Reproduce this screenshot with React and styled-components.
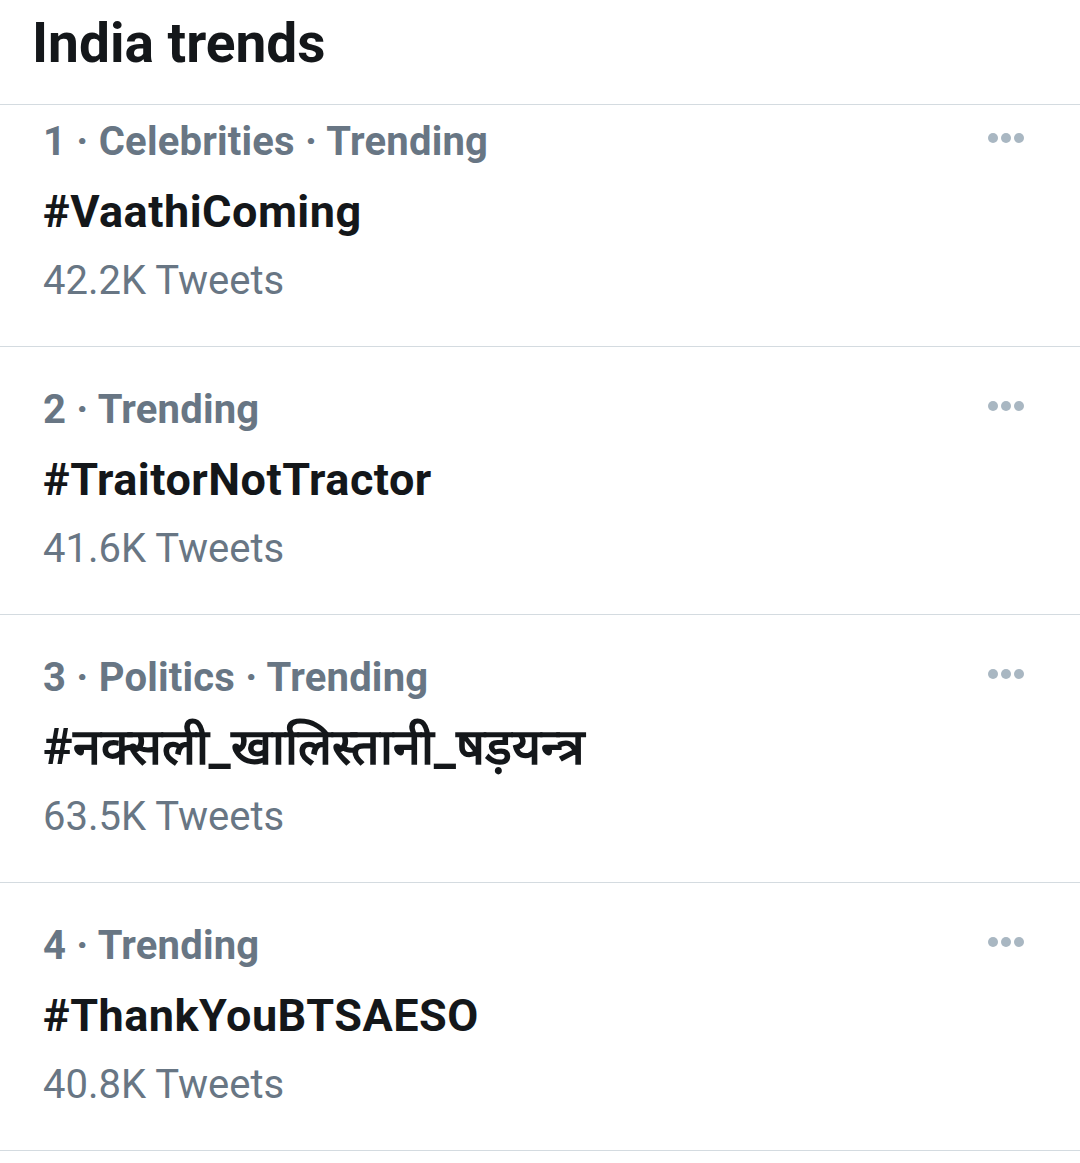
import React from 'react';
import styled, { createGlobalStyle } from 'styled-components';

const GlobalStyle = createGlobalStyle`
    html, body {
        margin: 0;
        padding: 0;
        background: #ffffff;
    }
    body {
        font-family: Roboto, "Noto Sans", "Liberation Sans", sans-serif;
    }
`;

const trends = [
    { rank: 1, category: 'Celebrities', name: '#VaathiComing', count: '42.2K' },
    { rank: 2, name: '#TraitorNotTractor', count: '41.6K' },
    { rank: 3, category: 'Politics', name: '#नक्सली_खालिस्तानी_षड़यन्त्र', count: '63.5K', lang: 'hi' },
    { rank: 4, name: '#ThankYouBTSAESO', count: '40.8K' },
];

const TrendsPanel = styled.div`
    width: 1080px;
    background: #ffffff;
`;

const PanelHeader = styled.div`
    height: 105px;
    box-sizing: border-box;
    padding: 3px 32px 0;
    border-bottom: 1px solid #d4dbe0;

    h1 {
        margin: 0;
        font-family: Roboto, sans-serif;
        font-weight: 700;
        font-size: 55px;
        line-height: 80px;
        color: #14171a;
    }
`;

// first row is partly scrolled under the header
const TrendRow = styled.div`
    display: flex;
    align-items: flex-start;
    padding: ${(p) => (p.$clipped ? '2px' : '28px')} 56px 30px 43px;
    border-bottom: 1px solid #d4dbe0;
`;

const TrendBody = styled.div`
    flex: 1;
    font-family: Roboto, sans-serif;
`;

const TrendMeta = styled.div`
    font-size: 40px;
    line-height: 70px;
    font-weight: 700;
    letter-spacing: 0.2px;
    color: #687684;
`;

const TrendName = styled.div`
    font-size: 45px;
    line-height: 69px;
    font-weight: 700;
    letter-spacing: 0.5px;
    color: #14171a;

    &:lang(hi) {
        font-size: 50px;
        letter-spacing: 0;
    }
`;

const TrendCount = styled.div`
    font-size: 40px;
    line-height: 70px;
    font-weight: 400;
    color: #687684;
`;

const MoreButton = styled.div`
    display: flex;
    gap: 3px;
    margin-top: 26px;

    span {
        width: 10px;
        height: 10px;
        border-radius: 50%;
        background: #a9b7c2;
    }
`;

const Trend = ({ trend, clipped }) => {
    const meta = [trend.rank, trend.category, 'Trending'].filter(Boolean).join(' · ');
    return (
        <TrendRow $clipped={clipped}>
            <TrendBody>
                <TrendMeta>{meta}</TrendMeta>
                <TrendName lang={trend.lang || 'en'}>{trend.name}</TrendName>
                <TrendCount>{trend.count} Tweets</TrendCount>
            </TrendBody>
            <MoreButton>
                <span />
                <span />
                <span />
            </MoreButton>
        </TrendRow>
    );
};

const App = () => {
    return (
        <>
            <GlobalStyle />
            <TrendsPanel>
                <PanelHeader>
                    <h1>India trends</h1>
                </PanelHeader>
                {trends.map((trend, idx) => (
                    <Trend key={`trend_${trend.rank}`} trend={trend} clipped={idx === 0} />
                ))}
            </TrendsPanel>
        </>
    );
};

export default App;
